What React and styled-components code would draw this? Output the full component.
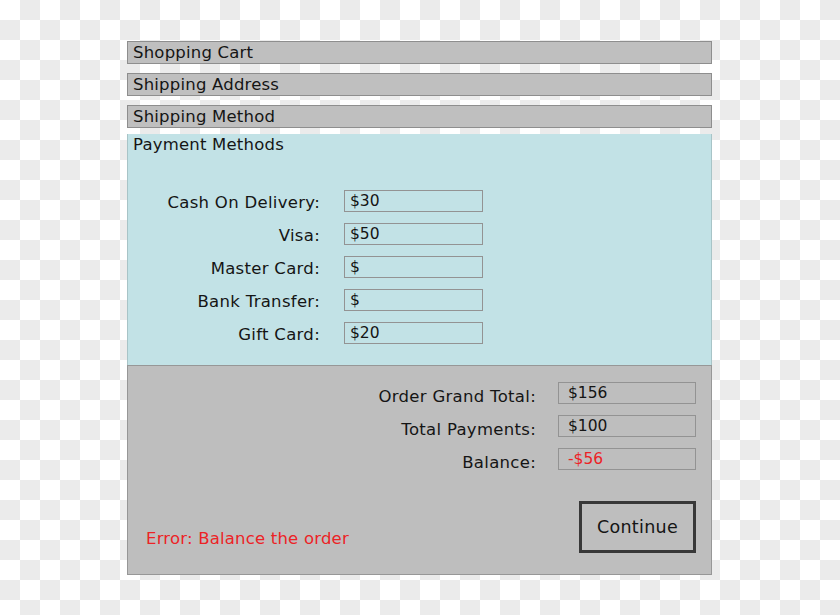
import styled, { createGlobalStyle } from "styled-components";

const GlobalStyle = createGlobalStyle`
  html, body {
    margin: 0;
    padding: 0;
  }
  body {
    font-family: "DejaVu Sans", "Liberation Sans", sans-serif;
    color: #151515;
    background: repeating-conic-gradient(#ebebeb 0 25%, #ffffff 0 50%) 0 0 / 40px 40px;
    min-height: 615px;
  }
`;

const Page = styled.div`
  padding: 41px 0 0 127px;
  width: 585px;
  display: flex;
  flex-direction: column;
`;

const StepBar = styled.div`
  height: 21px;
  background: #bfbfbf;
  border: 1px solid #8e8e8e;
  margin-bottom: 9px;
  padding-left: 5px;
  font-size: 16.5px;
  letter-spacing: 0.2px;
  line-height: 22px;
`;

const PaymentPanel = styled.div`
  margin-top: -3px;
  height: 231px;
  background: #c2e2e6;
  border-left: 1px solid #a8c4c7;
  border-right: 1px solid #a8c4c7;
  padding: 0 0 0 5px;
`;

const PanelTitle = styled.div`
  font-size: 16.5px;
  letter-spacing: 0.2px;
  line-height: 22px;
`;

const FieldList = styled.div`
  margin-top: 34px;
  display: flex;
  flex-direction: column;
  gap: 11px;
`;

const FieldRow = styled.div`
  height: 22px;
  display: grid;
  grid-template-columns: ${(p) => p.labelWidth}px ${(p) => p.boxWidth}px;
  column-gap: ${(p) => p.gap}px;
`;

const Label = styled.div`
  height: 22px;
  text-align: right;
  font-size: 16.5px;
  letter-spacing: 0.3px;
  line-height: ${(p) => p.lineHeight || 26}px;
  white-space: nowrap;
`;

const ValueBox = styled.div`
  height: 20px;
  border: 1px solid #939393;
  padding-left: ${(p) => p.indent || 5}px;
  font-size: 15.5px;
  line-height: 20px;
  color: ${(p) => (p.negative ? "#ec2326" : "#151515")};
`;

const SummaryPanel = styled.div`
  height: 208px;
  background: #bebebe;
  border: 1px solid #979797;
  display: flex;
  flex-direction: column;
`;

const SummaryList = styled.div`
  margin-top: 16px;
  display: flex;
  flex-direction: column;
  gap: 11px;
`;

const Footer = styled.div`
  margin-top: 31px;
  display: flex;
  justify-content: space-between;
  align-items: flex-end;
  padding: 0 15px 0 18px;
`;

const ErrorText = styled.div`
  color: #ec2326;
  font-size: 16.5px;
  letter-spacing: 0.2px;
  line-height: 20px;
  margin-bottom: 4px;
`;

const ContinueButton = styled.button`
  width: 117px;
  height: 52px;
  background: transparent;
  border: 3px solid #383838;
  font-family: inherit;
  font-size: 17.5px;
  letter-spacing: 0.3px;
  color: #151515;
  cursor: pointer;
`;

const methods = [
  { label: "Cash On Delivery:", value: "$30" },
  { label: "Visa:", value: "$50" },
  { label: "Master Card:", value: "$" },
  { label: "Bank Transfer:", value: "$" },
  { label: "Gift Card:", value: "$20" },
];

const totals = [
  { label: "Order Grand Total:", value: "$156" },
  { label: "Total Payments:", value: "$100" },
  { label: "Balance:", value: "-$56", negative: true },
];

export default function App() {
  return (
    <>
      <GlobalStyle />
      <Page>
        <StepBar>Shopping Cart</StepBar>
        <StepBar>Shipping Address</StepBar>
        <StepBar>Shipping Method</StepBar>
        <PaymentPanel>
          <PanelTitle>Payment Methods</PanelTitle>
          <FieldList>
            {methods.map((m) => (
              <FieldRow key={m.label} labelWidth={187} boxWidth={139} gap={24}>
                <Label>{m.label}</Label>
                <ValueBox>{m.value}</ValueBox>
              </FieldRow>
            ))}
          </FieldList>
        </PaymentPanel>
        <SummaryPanel>
          <SummaryList>
            {totals.map((t) => (
              <FieldRow key={t.label} labelWidth={408} boxWidth={138} gap={22}>
                <Label lineHeight={30}>{t.label}</Label>
                <ValueBox indent={9} negative={t.negative}>
                  {t.value}
                </ValueBox>
              </FieldRow>
            ))}
          </SummaryList>
          <Footer>
            <ErrorText>Error: Balance the order</ErrorText>
            <ContinueButton>Continue</ContinueButton>
          </Footer>
        </SummaryPanel>
      </Page>
    </>
  );
}
